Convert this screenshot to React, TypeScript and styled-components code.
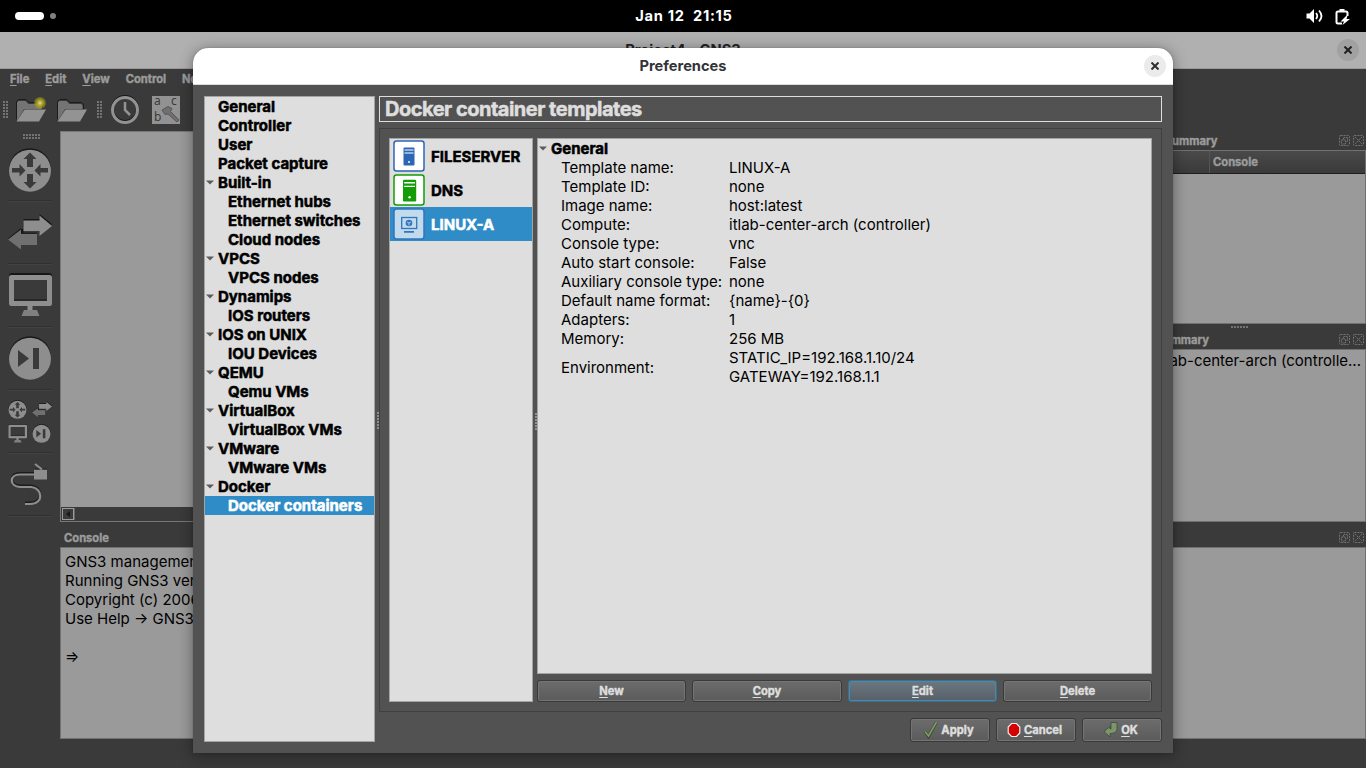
import * as React from 'react'
import styled, { createGlobalStyle, css } from 'styled-components'

const GlobalStyle = createGlobalStyle`
  * { box-sizing: border-box; }
  body {
    margin: 0;
    font-family: Inter, sans-serif;
    font-size: 15px;
    color: #000;
    overflow: hidden;
  }
`

const panel = css`
  background: #dedede;
  border: 1px solid #a4a4a4;
`

const heavy = css`
  font-weight: 700;
  -webkit-text-stroke: 0.5px currentColor;
`

const small = css`
  font-family: Inter, sans-serif;
  font-size: 11.2px;
  font-weight: 700;
  -webkit-text-stroke: 0.4px currentColor;
`

const S = {
  Screen: styled.div`
    width: 1366px;
    height: 768px;
    display: flex;
    flex-direction: column;
    background: #3a3a3a;
    position: relative;
    overflow: hidden;
  `,
  TopBar: styled.header`
    height: 32px;
    flex: none;
    background: #000;
    color: #fff;
    display: grid;
    grid-template-columns: 1fr auto 1fr;
    align-items: center;
    padding: 0 15px;
  `,
  Workspaces: styled.div`
    display: flex;
    align-items: center;
    gap: 6px;
  `,
  Pill: styled.span<{ $active?: boolean }>`
    width: ${({ $active }) => ($active ? 29 : 6)}px;
    height: ${({ $active }) => ($active ? 8 : 6)}px;
    border-radius: 4px;
    background: ${({ $active }) => ($active ? '#fff' : '#808080')};
  `,
  Clock: styled.div`
    font-size: 14.67px;
    font-weight: 700;
    letter-spacing: 0.7px;
    padding-left: 2px;
    white-space: pre;
  `,
  Tray: styled.div`
    display: flex;
    justify-content: flex-end;
    gap: 11px;
    padding-right: 1px;
  `,
  TitleBar: styled.div`
    height: 37px;
    flex: none;
    background: #b0b0b0;
    border-bottom: 1px solid #999;
    display: grid;
    grid-template-columns: 1fr auto 1fr;
    align-items: center;
    padding: 0 7px;
    font-size: 14.67px;
    font-weight: 700;
    color: #232325;
  `,
  Menu: styled.nav`
    ${small}
    display: flex;
    gap: 16px;
    height: 21px;
    flex: none;
    padding: 3px 10px 0;
    line-height: 15px;
    color: #9b9b9b;
    white-space: nowrap;
  `,
  Mnemonic: styled.span`
    text-decoration: underline;
    text-underline-offset: 2px;
    text-decoration-thickness: 1px;
    text-decoration-skip-ink: none;
  `,
  Toolbar: styled.div`
    height: 41px;
    flex: none;
    display: flex;
    align-items: center;
    padding: 0 0 2px 2px;
  `,
  Work: styled.div`
    flex: 1;
    min-height: 0;
    display: grid;
    grid-template-columns: 60px 1fr 259px;
  `,
  Devices: styled.aside`
    display: flex;
    flex-direction: column;
    align-items: center;
    padding-top: 3px;
    > svg { margin-left: 4px; }
  `,
  Device: styled.div`
    width: 44px;
    height: 63px;
    border-bottom: 1px solid #303030;
    box-shadow: 0 1px #424242;
    display: flex;
    align-items: center;
    justify-content: center;
    &:first-of-type { height: 61px; }
  `,
  Column: styled.section`
    display: flex;
    flex-direction: column;
    min-width: 0;
  `,
  Pane: styled.div<{ $height: number }>`
    height: ${({ $height }) => $height}px;
    flex: none;
    background: #9a9a9a;
    border: 1px solid #717171;
    overflow: hidden;
    white-space: pre;
    line-height: 19px;
  `,
  Canvas: styled.div`
    height: 391px;
    border: 1px solid #777;
    display: flex;
    flex-direction: column;
    flex: none;
  `,
  Scene: styled.div`
    flex: 1;
    background: #9a9a9a;
  `,
  Scrollbar: styled.div`
    height: 14px;
    background: #3a3a3a;
  `,
  ScrollButton: styled.div`
    width: 12px;
    height: 12px;
    margin: 1px;
    border: 1px solid #9b9b9b;
    box-shadow: 1px 0 #666;
    display: flex;
    align-items: center;
    justify-content: center;
  `,
  DockTitle: styled.div<{ $height: number }>`
    ${small}
    height: ${({ $height }) => $height}px;
    flex: none;
    display: flex;
    align-items: flex-end;
    gap: 3px;
    padding: 0 2px 1px 4px;
    color: #9b9b9b;
    line-height: 15px;
    b { font-weight: inherit; flex: 1; }
    svg { margin-bottom: 3px; }
  `,
  ColumnHead: styled.div`
    height: 23px;
    background: linear-gradient(#4a4a4a, #3a3a3a);
    border-bottom: 1px solid #1e1e1e;
    display: flex;
    justify-content: flex-end;
    span {
      ${small}
      line-height: 19px;
      width: 156px;
      border-left: 1px solid #545454;
      padding: 2px 3px;
      color: #9b9b9b;
    }
  `,
  Dialog: styled.div`
    position: absolute;
    left: 193px;
    top: 48px;
    width: 980px;
    height: 705px;
    background: #525252;
    border-radius: 15px 15px 0 0;
    overflow: hidden;
    display: flex;
    flex-direction: column;
  `,
  DialogShadow: styled.div`
    position: absolute;
    left: 193px;
    top: 48px;
    width: 980px;
    height: 705px;
    border-radius: 15px 15px 0 0;
    box-shadow: 0 2px 14px 1px rgba(0, 0, 0, 0.34), 0 0 2px rgba(0, 0, 0, 0.2);
  `,
  DialogBar: styled.div`
    height: 37px;
    flex: none;
    background: #fff;
    border-bottom: 1px solid #dadada;
    display: grid;
    grid-template-columns: 1fr auto 1fr;
    align-items: center;
    padding: 0 7px;
    font-size: 14.67px;
    font-weight: 700;
    color: #333338;
  `,
  Close: styled.button<{ $dim?: boolean }>`
    grid-column: 3;
    justify-self: end;
    width: 22px;
    height: 22px;
    border: 0;
    padding: 0;
    border-radius: 50%;
    background: ${({ $dim }) => ($dim ? '#a1a1a1' : '#ebebeb')};
    display: flex;
    align-items: center;
    justify-content: center;
  `,
  DialogBody: styled.div`
    flex: 1;
    min-height: 0;
    display: flex;
    gap: 4px;
    padding: 11px;
  `,
  Tree: styled.ul`
    ${panel}
    width: 171px;
    margin: 0;
    padding: 0;
    list-style: none;
  `,
  TreeRow: styled.li<{ $child?: boolean; $selected?: boolean }>`
    ${heavy}
    height: 19px;
    line-height: 19px;
    padding-left: ${({ $child }) => ($child ? 23 : 1)}px;
    display: flex;
    align-items: center;
    white-space: nowrap;
    background: ${({ $selected }) => ($selected ? '#308cc6' : 'none')};
    color: ${({ $selected }) => ($selected ? '#fff' : '#000')};
  `,
  Arrow: styled.span<{ $hidden?: boolean }>`
    width: 8px;
    margin-right: 4px;
    display: flex;
    flex: none;
    visibility: ${({ $hidden }) => ($hidden ? 'hidden' : 'visible')};
  `,
  Page: styled.div`
    flex: 1;
    display: flex;
    flex-direction: column;
  `,
  PageTitle: styled.h1`
    margin: 0 0 6px;
    height: 26px;
    border: 1px solid #dedede;
    padding-left: 5px;
    font-size: 20px;
    line-height: 24px;
    font-weight: 700;
    letter-spacing: -0.5px;
    -webkit-text-stroke: 0.5px currentColor;
    color: #dedede;
  `,
  Frame: styled.div`
    height: 584px;
    border: 1px solid #404040;
    padding: 9px;
    display: flex;
    gap: 4px;
  `,
  Templates: styled.div`
    ${panel}
    width: 144px;
  `,
  Template: styled.div<{ $selected?: boolean }>`
    ${heavy}
    height: 34px;
    display: flex;
    align-items: center;
    gap: 6px;
    padding-left: 3px;
    background: ${({ $selected }) => ($selected ? '#308cc6' : 'none')};
    color: ${({ $selected }) => ($selected ? '#fff' : '#000')};
  `,
  Details: styled.div`
    flex: 1;
    display: flex;
    flex-direction: column;
    gap: 6px;
  `,
  Info: styled.div`
    ${panel}
    flex: 1;
  `,
  Properties: styled.dl`
    margin: 0;
    padding-left: 23px;
    display: grid;
    grid-template-columns: 168px 1fr;
    align-items: center;
    line-height: 19px;
    white-space: pre;
    dd, dt { margin: 0; }
  `,
  Actions: styled.div`
    display: grid;
    grid-template-columns: 149px 150px 149px 149px;
    gap: 6px;
  `,
  Footer: styled.div`
    display: grid;
    grid-template-columns: repeat(3, 80px);
    justify-content: end;
    gap: 6px;
    margin-top: 6px;
  `,
  Button: styled.button<{ $tall?: boolean; $focus?: boolean }>`
    ${small}
    height: ${({ $tall }) => ($tall ? 24 : 22)}px;
    padding: ${({ $tall }) => ($tall ? '0 3px 0 0' : 0)};
    border: 1px solid ${({ $focus }) => ($focus ? '#2575a8' : '#393939')};
    border-radius: 3px;
    box-shadow: inset 0 0 0 1px ${({ $focus }) => ($focus ? '#68808e' : '#757575')};
    background: ${({ $focus }) => ($focus
    ? 'linear-gradient(#6b7880, #565f67)'
    : 'linear-gradient(#6c6c6c, #5b5b5b)')};
    color: #dedede;
    line-height: 14px;
    display: flex;
    align-items: center;
    justify-content: center;
    gap: 3px;
  `,
  Handle: styled.span`
    position: absolute;
    width: 2px;
    height: 18px;
    background: repeating-linear-gradient(#8f8f8f 0 2px, #525252 2px 3px);
  `
}

const templateRows: [string, string][] = [
  ['Template name:', 'LINUX-A'],
  ['Template ID:', 'none'],
  ['Image name:', 'host:latest'],
  ['Compute:', 'itlab-center-arch (controller)'],
  ['Console type:', 'vnc'],
  ['Auto start console:', 'False'],
  ['Auxiliary console type:', 'none'],
  ['Default name format:', '{name}-{0}'],
  ['Adapters:', '1'],
  ['Memory:', '256 MB'],
  ['Environment:', 'STATIC_IP=192.168.1.10/24\nGATEWAY=192.168.1.1']
]

const categories: { name: string; pages?: string[] }[] = [
  { name: 'General' },
  { name: 'Controller' },
  { name: 'User' },
  { name: 'Packet capture' },
  { name: 'Built-in', pages: ['Ethernet hubs', 'Ethernet switches', 'Cloud nodes'] },
  { name: 'VPCS', pages: ['VPCS nodes'] },
  { name: 'Dynamips', pages: ['IOS routers'] },
  { name: 'IOS on UNIX', pages: ['IOU Devices'] },
  { name: 'QEMU', pages: ['Qemu VMs'] },
  { name: 'VirtualBox', pages: ['VirtualBox VMs'] },
  { name: 'VMware', pages: ['VMware VMs'] },
  { name: 'Docker', pages: ['Docker containers'] }
]

const Label = ({ text }: { text: string }) => (
  <span><S.Mnemonic>{text[0]}</S.Mnemonic>{text.slice(1)}</span>
)

const Expander = ({ hidden }: { hidden?: boolean }) => (
  <S.Arrow $hidden={hidden}>
    <svg width="8" height="5"><path d="M0 .5h8L4 4.5z" fill="#5c5c5c" /></svg>
  </S.Arrow>
)

const CloseButton = ({ dim }: { dim?: boolean }) => (
  <S.Close $dim={dim}>
    <svg width="8" height="8" stroke={dim ? '#202022' : '#2e2e33'} strokeWidth="2">
      <path d="M.5.5l7 7m0-7l-7 7" />
    </svg>
  </S.Close>
)

const Grip = ({ horizontal }: { horizontal?: boolean }) => {
  const [cols, rows] = horizontal ? [6, 2] : [2, 6]
  const dots = Array.from({ length: cols * rows }, (_, i) => [i % cols, Math.floor(i / cols)])
  return (
    <svg width={horizontal ? 18 : 6} height={horizontal ? 6 : 18} fill="#747474">
      {dots.map(([x, y]) => <rect key={`${x}-${y}`} x={x * 3} y={y * 3} width="2" height="2" />)}
    </svg>
  )
}

const FolderIcon = ({ isNew }: { isNew?: boolean }) => (
  <svg width="32" height="26" viewBox="0 0 32 26">
    <path d="M1.500 22V4.500l2-2h7.500l3 3h11.500l2 2V12" fill="#3a3a3a" stroke="#1c1c1c" />
    <path d="M2 23V5.500L3.500 4h7l3 3H25l1.500 1.500V12H9L3 22z" fill="#747474" />
    <path d="M1.500 24.500L9.500 12.500h21.500l-7 12z" fill="#939393" />
    {isNew && (
      <>
        <defs>
          <radialGradient id="glow">
            <stop offset="0" stopColor="#d8d6c4" />
            <stop offset=".4" stopColor="#b3a920" />
            <stop offset="1" stopColor="#a49a10" stopOpacity=".4" />
          </radialGradient>
        </defs>
        <circle cx="25" cy="6" r="6" fill="url(#glow)" />
      </>
    )}
  </svg>
)

const RouterIcon = ({ size }: { size: number }) => (
  <svg width={size} height={size} viewBox="0 0 44 44">
    <circle cx="22" cy="21.200" r="21" fill="#171717" />
    <circle cx="22" cy="22.700" r="21" fill="#8e8e8e" />
    <path
      d="M22 4.500l6.500 6.500h-3.500v8h-6v-8h-3.500zM22 40.500l6.500-6.500h-3.500v-8h-6v8h-3.500zM4 20h7.500v-4l6 6.500-6 6v-4H4zM40 20h-7.500v-4l-6 6.500 6 6v-4H40z"
      fill="#3a3a3a"
    />
  </svg>
)

const SwitchIcon = ({ size }: { size: number }) => (
  <svg width={size} height={size * 0.82} viewBox="0 0 44 36">
    <path d="M15.500 5h16V0L44 10 31.500 20v-5H13V24 34L0 24.500 13 14v5h2.500z" fill="#171717" />
    <path d="M0 25.500L13 15.500v4.500h16v11H13v4.500z" fill="#707070" />
    <path d="M15.500 6.500h16V1.500L44 12 31.500 22v-5h-16z" fill="#8e8e8e" />
    <path d="M13 19.200h16" stroke="#202020" strokeWidth="1.500" />
  </svg>
)

const MonitorIcon = ({ size }: { size: number }) => (
  <svg width={size} height={size} viewBox="0 0 44 44">
    <rect x="1" y="0" width="43" height="30" rx="3" fill="#171717" />
    <rect x="3.500" y="4.500" width="38" height="26" fill="#3a3a3a" stroke="#8e8e8e" strokeWidth="5" strokeLinejoin="round" />
    <path d="M6 27h33" stroke="#171717" />
    <path d="M19.500 32h5v5h-5z" fill="#8e8e8e" />
    <path d="M16 37h13l2.500 6h-18z" fill="#808080" />
  </svg>
)

const SecurityIcon = ({ size }: { size: number }) => (
  <svg width={size} height={size} viewBox="0 0 44 44">
    <circle cx="22" cy="21.200" r="21" fill="#171717" />
    <circle cx="22" cy="22.700" r="21" fill="#8e8e8e" />
    <path d="M10 14l11 8.500L10 31z" fill="#3a3a3a" />
    <rect x="25" y="12" width="6" height="21" fill="#3a3a3a" />
  </svg>
)

const cable = 'M25 13.500H10C-1 13.500-1 25 10 26h11c12 1 13 17-1 17h-5'

const CableIcon = () => (
  <svg width="40" height="46" viewBox="0 0 40 46" fill="none">
    <path d={cable} stroke="#1c1c1c" strokeWidth="2.200" transform="translate(0 -1.500)" />
    <path d={cable} stroke="#8e8e8e" strokeWidth="2.200" />
    <path d="M24 8.500h13v10H24z" fill="#8e8e8e" />
    <path d="M24.500 8h12.500" stroke="#1c1c1c" />
    <path d="M25 3l7 5.500" stroke="#8e8e8e" strokeWidth="2" />
  </svg>
)

const DeviceGroup = styled.div`
  display: grid;
  grid-template-columns: 18px 20px;
  gap: 5px;
  align-items: center;
  justify-items: center;
`

const ServerIcon = ({ color, large }: { color: string; large?: boolean }) => (
  <svg width="32" height="32" viewBox="0 0 32 32">
    <rect x="1" y="1" width="30" height="30" rx="2.500" fill="#fff" stroke={color} strokeWidth="1.500" />
    <g transform={large ? 'translate(-2.600 -2.600) scale(1.200)' : 'translate(0 .5)'} fill={color}>
      <rect x="10.500" y="7" width="11" height="18" rx="1" />
      <path d="M11.500 9.500h9M11.500 12.500h9" stroke="#fff" strokeWidth="1.200" />
      <circle cx="16" cy="21.500" r="1" fill="#fff" />
    </g>
  </svg>
)

const GuestIcon = () => (
  <svg width="32" height="32" viewBox="0 0 32 32" stroke="#3175bf" fill="none">
    <rect x="1" y="1" width="30" height="30" rx="2.500" fill="#c1daec" strokeWidth="1.500" />
    <rect x="8.700" y="9.500" width="15" height="11" strokeWidth="1.300" />
    <circle cx="16" cy="15" r="3.300" fill="#3175bf" stroke="none" />
    <path d="M14 14l2 1 2-1M16 15v2.500" stroke="#c1daec" strokeWidth=".8" />
    <path d="M11 23.800h10" strokeWidth="1.800" />
  </svg>
)

const DockButtons = () => (
  <svg width="25" height="11" viewBox="0 0 25 11" fill="none" stroke="#737373" strokeWidth="1">
    <rect x=".5" y=".5" width="10" height="10" rx="1" strokeDasharray="2 1" />
    <path d="M2.500 5h4v4h-4zM4.500 4.500v-2h4v4h-2" strokeDasharray="1.500 .7" />
    <rect x="14.500" y=".5" width="10" height="10" rx="1" strokeDasharray="2 1" />
    <path d="M16 2l7 7m0-7l-7 7" strokeDasharray="1.800 .8" />
  </svg>
)

const ToolSlot = styled.div<{ $left: number }>`
  margin-left: ${({ $left }) => $left}px;
  display: flex;
`

const ConsolePane = styled(S.Pane)`
  padding: 4px;
`

const ServerSummary = styled(S.Pane)`
  padding: 1px 4px;
  text-align: right;
`

const SplitGrip = styled.div`
  display: flex;
  justify-content: center;
  height: 4px;
  padding: 2px 0 0 6px;
  overflow: hidden;
`

function MainWindow() {
  return (
    <>
      <S.TitleBar>
        <span />
        <span>Project4 - GNS3</span>
        <CloseButton dim />
      </S.TitleBar>
      <S.Menu>
        <Label text="File" />
        <Label text="Edit" />
        <Label text="View" />
        <span>Control</span>
        <span>Node</span>
      </S.Menu>
      <S.Toolbar>
        <ToolSlot $left={1}><Grip /></ToolSlot>
        <ToolSlot $left={6}><FolderIcon isNew /></ToolSlot>
        <ToolSlot $left={9}><FolderIcon /></ToolSlot>
        <ToolSlot $left={9}><Grip /></ToolSlot>
        <ToolSlot $left={7}>
          <svg width="30" height="30" fill="none">
            <circle cx="15" cy="14" r="12.500" stroke="#171717" strokeWidth="3" />
            <circle cx="15" cy="15" r="12.500" stroke="#929292" strokeWidth="3" />
            <path d="M15 7v8l5 5" stroke="#929292" strokeWidth="2.500" />
          </svg>
        </ToolSlot>
        <ToolSlot $left={12}>
          <svg width="28" height="28" fontFamily="Noto Sans, sans-serif" fontSize="12" overflow="visible">
            <rect width="28" height="28" fill="#929292" />
            <text x="2" y="9" fill="#3a3a3a">a</text>
            <text x="19" y="9" fill="#3a3a3a">c</text>
            <text x="2" y="25" fill="#3a3a3a">b</text>
            <path d="M10 14l6-3.500 4 2-1.500 3L27 24l-2 2-9-8-3 .5z" fill="#707070" stroke="#555" />
          </svg>
        </ToolSlot>
      </S.Toolbar>
      <S.Work>
        <S.Devices>
          <Grip horizontal />
          <S.Device><RouterIcon size={44} /></S.Device>
          <S.Device><SwitchIcon size={44} /></S.Device>
          <S.Device><MonitorIcon size={44} /></S.Device>
          <S.Device><SecurityIcon size={44} /></S.Device>
          <S.Device>
            <DeviceGroup>
              <RouterIcon size={19} />
              <SwitchIcon size={20} />
              <MonitorIcon size={19} />
              <SecurityIcon size={19} />
            </DeviceGroup>
          </S.Device>
          <S.Device><CableIcon /></S.Device>
        </S.Devices>
        <S.Column>
          <S.Canvas>
            <S.Scene />
            <S.Scrollbar>
              <S.ScrollButton>
                <svg width="4" height="6"><path d="M4 0v6L0 3z" fill="#181818" /></svg>
              </S.ScrollButton>
            </S.Scrollbar>
          </S.Canvas>
          <S.DockTitle $height={25}><b>Console</b></S.DockTitle>
          <ConsolePane $height={192}>
            {'GNS3 management console.\nRunning GNS3 version\nCopyright (c) 2006\nUse Help → GNS3\n\n⇒'}
          </ConsolePane>
        </S.Column>
        <S.Column>
          <S.DockTitle $height={19}><b>Topology Summary</b><DockButtons /></S.DockTitle>
          <S.Pane $height={174}>
            <S.ColumnHead><span>Console</span></S.ColumnHead>
          </S.Pane>
          <SplitGrip><Grip horizontal /></SplitGrip>
          <S.DockTitle $height={21}><b>Servers Summary</b><DockButtons /></S.DockTitle>
          <ServerSummary $height={173}>itlab-center-arch (controlle...</ServerSummary>
          <S.DockTitle $height={25}><b /><DockButtons /></S.DockTitle>
          <S.Pane $height={192} />
        </S.Column>
      </S.Work>
    </>
  )
}

function Preferences() {
  return (
    <S.Dialog>
      <S.DialogBar>
        <span />
        <span>Preferences</span>
        <CloseButton />
      </S.DialogBar>
      <S.DialogBody>
        <S.Tree>
          {categories.map(({ name, pages }) => (
            <React.Fragment key={name}>
              <S.TreeRow><Expander hidden={!pages} />{name}</S.TreeRow>
              {pages?.map((page) => (
                <S.TreeRow key={page} $child $selected={page === 'Docker containers'}>{page}</S.TreeRow>
              ))}
            </React.Fragment>
          ))}
        </S.Tree>
        <S.Page>
          <S.PageTitle>Docker container templates</S.PageTitle>
          <S.Frame>
            <S.Templates>
              <S.Template><ServerIcon color="#2d66b5" />FILESERVER</S.Template>
              <S.Template><ServerIcon color="#129c06" large />DNS</S.Template>
              <S.Template $selected><GuestIcon />LINUX-A</S.Template>
            </S.Templates>
            <S.Details>
              <S.Info>
                <S.TreeRow as="div"><Expander />General</S.TreeRow>
                <S.Properties>
                  {templateRows.map(([name, value]) => (
                    <React.Fragment key={name}>
                      <dt>{name}</dt>
                      <dd>{value}</dd>
                    </React.Fragment>
                  ))}
                </S.Properties>
              </S.Info>
              <S.Actions>
                <S.Button><Label text="New" /></S.Button>
                <S.Button><Label text="Copy" /></S.Button>
                <S.Button $focus><Label text="Edit" /></S.Button>
                <S.Button><Label text="Delete" /></S.Button>
              </S.Actions>
            </S.Details>
          </S.Frame>
          <S.Footer>
            <S.Button $tall>
              <svg width="15" height="18" fill="none">
                <path d="M2 10.500l3.500 5L13.500 1" stroke="#34452a" strokeWidth="3" />
                <path d="M2 10.500l3.500 4.500L13.500 1" stroke="#7d9a66" strokeWidth="1.800" />
              </svg>
              <span>Apply</span>
            </S.Button>
            <S.Button $tall>
              <svg width="14" height="16">
                <path d="M4.500 1.500h5L12.800 5v6l-3.300 3.500h-5L1.200 11V5z" fill="#d40000" stroke="#eee" strokeWidth="1.200" />
              </svg>
              <Label text="Cancel" />
            </S.Button>
            <S.Button $tall>
              <svg width="15" height="18">
                <path d="M8 1.500h6v7q-.5 4-7 4v3.500L1 10.500l6-5v2.500h1z" fill="#7c966c" stroke="#3d4a36" strokeWidth=".8" />
              </svg>
              <Label text="OK" />
            </S.Button>
          </S.Footer>
        </S.Page>
      </S.DialogBody>
    </S.Dialog>
  )
}

const TreeHandle = styled(S.Handle)`
  left: 377px;
  top: 412px;
`

const TemplatesHandle = styled(S.Handle)`
  left: 535px;
  top: 413px;
`

export default function App() {
  return (
    <S.Screen>
      <GlobalStyle />
      <S.TopBar>
        <S.Workspaces><S.Pill $active /><S.Pill /></S.Workspaces>
        <S.Clock>Jan 12  21:15</S.Clock>
        <S.Tray>
          <svg width="17" height="16" viewBox="0 0 17 16" fill="#fff">
            <path d="M.5 5.500h3L8 1v14l-4.500-4.500h-3z" />
            <path d="M10 5q2.500 3 0 6M13 2.500q5 5.500 0 11" fill="none" stroke="#fff" strokeWidth="1.800" />
          </svg>
          <svg width="16" height="17" viewBox="0 0 16 17" fill="none" stroke="#fff" strokeWidth="2">
            <path d="M8 15.500H4q-1.500 0-1.500-1.500V5q0-1.500 1.500-1.500h8q1.500 0 1.500 1.500v3M5.500 2h5" />
            <path d="M12.500 7.500L6.500 13.500h3.500l-1.500 3.500 7.500-6h-3.500l1-3.500z" fill="#fff" stroke="none" />
          </svg>
        </S.Tray>
      </S.TopBar>
      <MainWindow />
      <S.DialogShadow />
      <Preferences />
      <TreeHandle />
      <TemplatesHandle />
    </S.Screen>
  )
}
